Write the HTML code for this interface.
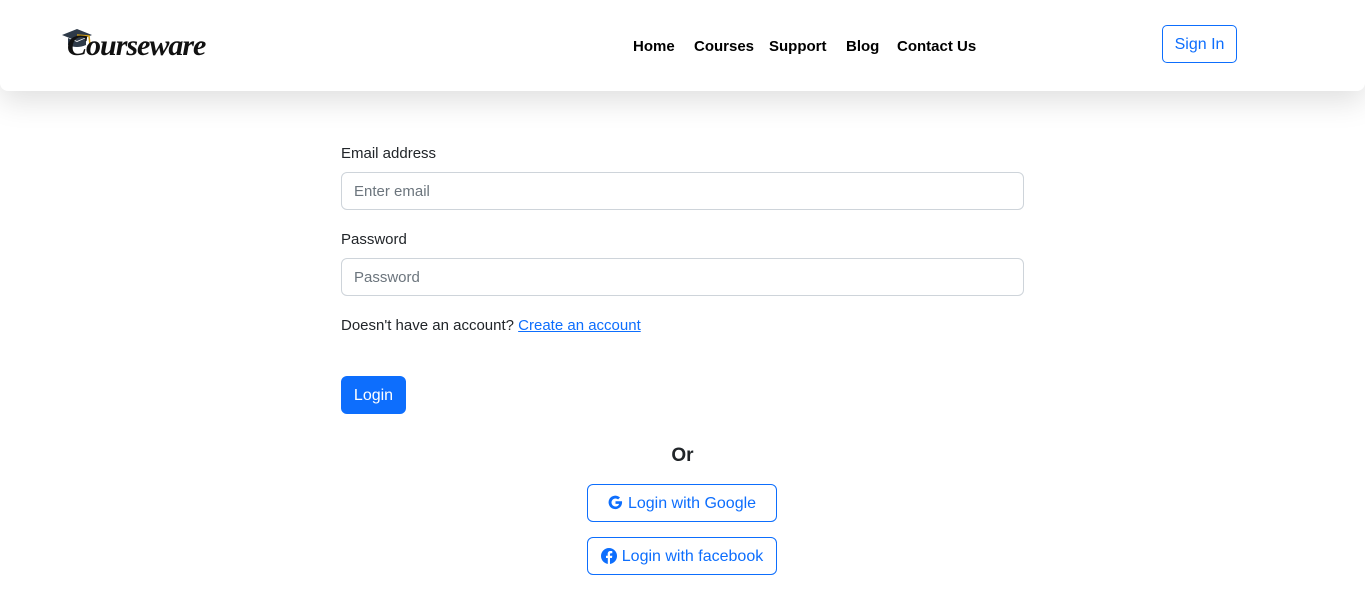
<!DOCTYPE html>
<html><head><style>
body{margin:0;background:#fff;font-family:"Liberation Sans",sans-serif;color:#212529;width:1365px;height:612px;overflow:hidden;position:relative}
.hdr{position:absolute;left:0;top:0;width:1365px;height:91px;background:#fff;box-shadow:0 10px 30px rgba(0,0,0,.13);border-radius:0 0 8px 8px}
.logo{position:absolute;left:67px;top:29px;font-family:"Liberation Serif",serif;font-style:italic;font-weight:bold;font-size:30px;color:#111;letter-spacing:-1px}
.nav{position:absolute;top:38px;font-weight:bold;font-size:15px;color:#000}
.signin{position:absolute;left:1162px;top:25px;width:75px;height:38px;border:1px solid #0d6efd;border-radius:5px;color:#0d6efd;font-size:16px;text-align:center;line-height:37px;box-sizing:border-box}
.lbl{position:absolute;left:341px;font-size:15px}
.inp{position:absolute;left:341px;width:683px;height:38px;border:1px solid #ced4da;border-radius:6px;box-sizing:border-box;padding-left:12px;line-height:37px;color:#6c757d;font-size:15px}
.btn{position:absolute;left:341px;top:376px;width:65px;height:38px;background:#0d6efd;color:#fff;border-radius:6px;text-align:center;line-height:39px;font-size:16px}
.ob{position:absolute;left:587px;width:190px;height:38px;border:1px solid #0d6efd;border-radius:6px;box-sizing:border-box;color:#0d6efd;font-size:16px;line-height:37px;text-align:center}
</style></head><body>
<div class="hdr">
<svg style="position:absolute;left:60px;top:27px" width="34" height="22" viewBox="0 0 34 22"><path d="M2 8 L17 2 L32 8 L17 14Z" fill="#2e3a48"/><path d="M8 11 L8 18 Q17 22 26 18 L26 11 L17 15Z" fill="#2e3a48"/><path d="M17 8 L29 9 L30 18" stroke="#d4a017" stroke-width="1.5" fill="none"/></svg>
<div class="logo">Courseware</div>
<span class="nav" style="left:633px">Home</span>
<span class="nav" style="left:694px">Courses</span>
<span class="nav" style="left:769px">Support</span>
<span class="nav" style="left:846px">Blog</span>
<span class="nav" style="left:897px">Contact Us</span>
<div class="signin">Sign In</div>
</div>
<div class="lbl" style="top:145px">Email address</div>
<div class="inp" style="top:172px">Enter email</div>
<div class="lbl" style="top:231px">Password</div>
<div class="inp" style="top:258px">Password</div>
<div class="lbl" style="top:317px">Doesn't have an account? <span style="color:#0d6efd;text-decoration:underline">Create an account</span></div>
<div class="btn">Login</div>
<div style="position:absolute;left:0;width:1365px;top:445px;text-align:center;font-weight:bold;font-size:19px">Or</div>
<div class="ob" style="top:484px"><svg width="15" height="15" viewBox="0 0 16 16" style="vertical-align:-2px;margin-right:5px"><path d="M14.5 6.7H8v2.7h3.8c-.4 1.8-2 2.9-3.8 2.9a4.3 4.3 0 1 1 2.8-7.6l2-2A7.2 7.2 0 1 0 15 8c0-.5 0-.9-.1-1.3z" fill="#0d6efd"/></svg>Login with Google</div>
<div class="ob" style="top:537px"><svg width="16" height="16" viewBox="0 0 16 16" style="vertical-align:-3px;margin-right:5px"><circle cx="8" cy="8" r="8" fill="#0d6efd"/><path d="M9 16V10h2l.3-2.3H9V6.3c0-.7.2-1.1 1.1-1.1h1.2V3.1c-.2 0-.9-.1-1.7-.1-1.7 0-2.9 1-2.9 2.9v1.8H5V10h1.8v6z" fill="#fff"/></svg>Login with facebook</div>
</body></html>
